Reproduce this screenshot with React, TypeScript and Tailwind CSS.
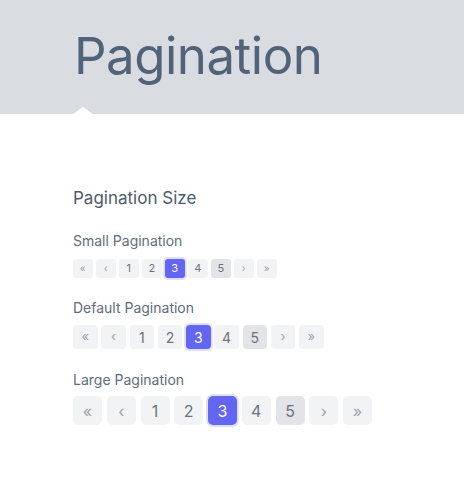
import { ReactNode } from 'react'

type Size = 'sm' | 'md' | 'lg'

const sizes: Record<Size, { btn: string; gap: string; text: string }> = {
  sm: { btn: 'w-[19.5px] h-[19px] rounded-[3px]', gap: 'gap-[3.5px]', text: 'text-[11px]' },
  md: { btn: 'w-[24.5px] h-[24px] rounded-[4px]', gap: 'gap-[3.75px]', text: 'text-[14px]' },
  lg: { btn: 'w-[29px] h-[29px] rounded-[5px]', gap: 'gap-[4.75px]', text: 'text-[16px]' },
}

function PageButton({ size, active, hover, children }: { size: Size; active?: boolean; hover?: boolean; children: ReactNode }) {
  const s = sizes[size]
  let tone = 'bg-[#f2f3f5] text-[#6b7280]'
  if (hover) tone = 'bg-[#e2e4e8] text-[#6b7280]'
  if (active) tone = 'bg-[#6366f1] text-white shadow-[0_0_0_2px_rgba(99,102,241,0.2)]'
  return (
    <div className={`${s.btn} ${s.text} ${tone} flex items-center justify-center`}>
      {children}
    </div>
  )
}

function Pagination({ size }: { size: Size }) {
  const s = sizes[size]
  const arrow = size === 'sm' ? 'text-[10px] text-[#9ca3af]' : size === 'md' ? 'text-[13px] text-[#9ca3af]' : 'text-[16px] text-[#9ca3af]'
  return (
    <div className={`flex ${s.gap}`}>
      <PageButton size={size}><span className={arrow}>«</span></PageButton>
      <PageButton size={size}><span className={arrow}>‹</span></PageButton>
      <PageButton size={size}>1</PageButton>
      <PageButton size={size}>2</PageButton>
      <PageButton size={size} active>3</PageButton>
      <PageButton size={size}>4</PageButton>
      <PageButton size={size} hover>5</PageButton>
      <PageButton size={size}><span className={arrow}>›</span></PageButton>
      <PageButton size={size}><span className={arrow}>»</span></PageButton>
    </div>
  )
}

export default function App() {
  return (
    <div className="w-[464px] h-[500px] bg-white overflow-hidden" style={{ fontFamily: 'Inter, "Noto Sans", sans-serif' }}>
      {/* header */}
      <div className="relative h-[114px] bg-[#d9dce1] pl-[74px] pt-[25px]">
        <h1 className="text-[51px] leading-[62px] tracking-[-0.5px] text-[#506379] font-normal">Pagination</h1>
        <div className="absolute left-[73px] bottom-0 w-0 h-0 border-l-[10px] border-r-[10px] border-b-[7px] border-l-transparent border-r-transparent border-b-white" />
      </div>

      <div className="pl-[73px] pt-[72px]">
        <h2 className="text-[17px] leading-[24px] text-[#4b5b6e]">Pagination Size</h2>

        <div className="mt-[21px] text-[14px] leading-[20px] text-[#5e6c7d]">Small Pagination</div>
        <div className="mt-[8px]">
          <Pagination size="sm" />
        </div>

        <div className="mt-[20px] text-[14px] leading-[20px] text-[#5e6c7d]">Default Pagination</div>
        <div className="mt-[7px]">
          <Pagination size="md" />
        </div>

        <div className="mt-[21px] text-[14px] leading-[20px] text-[#5e6c7d]">Large Pagination</div>
        <div className="mt-[6px]">
          <Pagination size="lg" />
        </div>
      </div>
    </div>
  )
}
